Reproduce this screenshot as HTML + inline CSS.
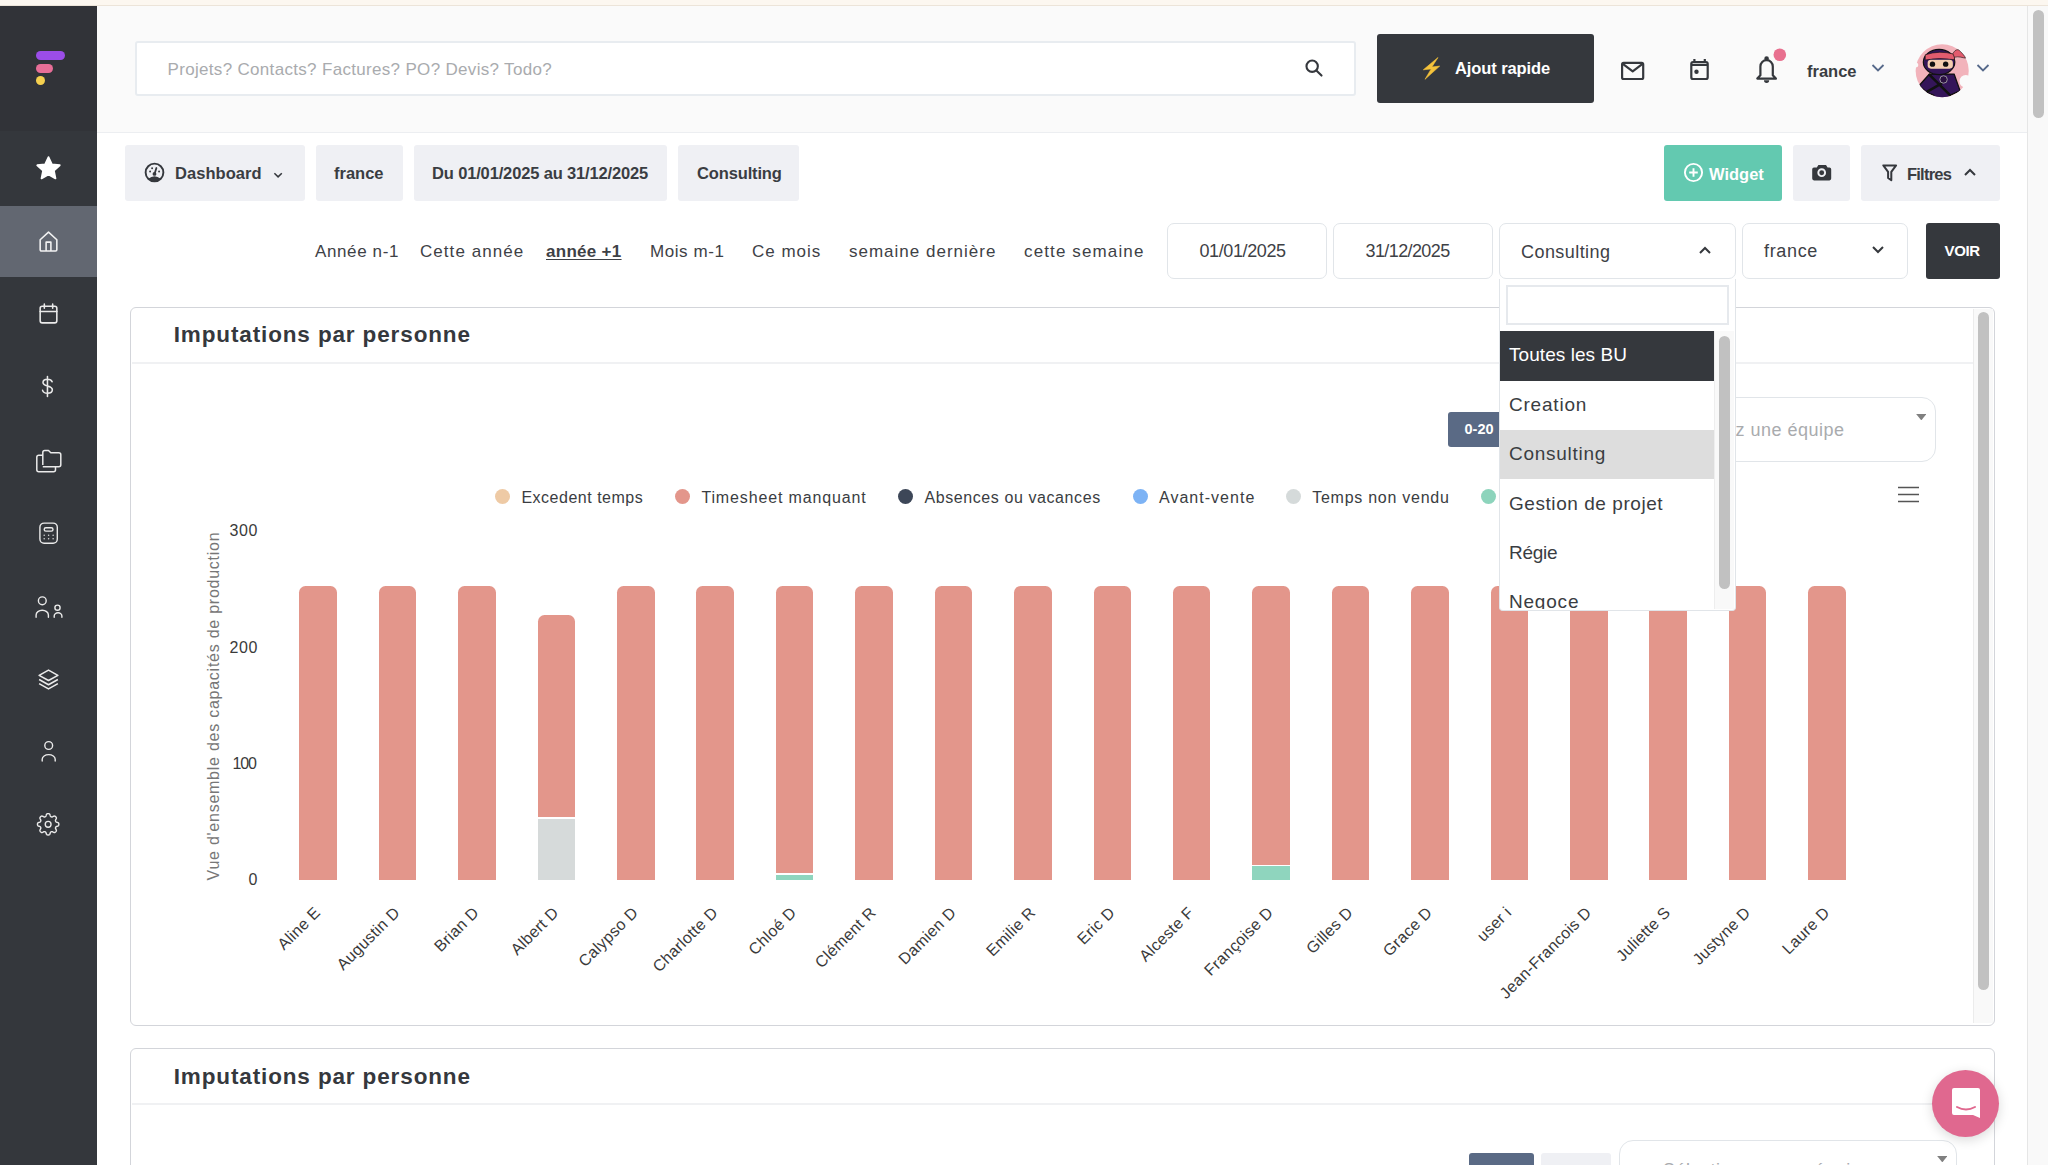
<!DOCTYPE html>
<html><head><meta charset="utf-8">
<style>
*{box-sizing:border-box;margin:0;padding:0}
html,body{width:2048px;height:1165px;overflow:hidden;background:#fff;font-family:"Liberation Sans",sans-serif;color:#3a3d42}
.a{position:absolute}
.t{position:absolute;white-space:nowrap;line-height:1}
.sico{position:absolute;left:36px;width:25px;height:25px}
.chip{position:absolute;top:145px;height:56px;background:#eff0f4;border-radius:3px}
.inp{position:absolute;top:223px;height:56px;border:1.6px solid #e1e5e9;border-radius:7px;background:#fff}
.card{position:absolute;left:130px;width:1865px;border:1.5px solid #d3d5da;border-radius:6px;background:#fff}
.bar{position:absolute;width:37.6px;background:#e3968b;border-radius:6.5px 6.5px 0 0}
.lbl{position:absolute;font-size:16px;color:#3a3a3a;white-space:nowrap;line-height:1;transform-origin:100% 50%;transform:rotate(-45deg)}
.dot{position:absolute;top:488.5px;width:15.3px;height:15.3px;border-radius:50%}
.item{position:absolute;left:1500.2px;width:213.8px;height:49.4px}
</style></head>
<body>
<div class="a" style="left:0;top:0;width:2048px;height:6px;background:#fcf7f0;border-bottom:1px solid #ece4d9"></div>
<div class="a" style="left:0;top:6px;width:97px;height:1159px;background:#34373c"></div>
<div class="a" style="left:0;top:6px;width:97px;height:125px;background:#313338"></div>
<div class="a" style="left:0;top:206px;width:97px;height:71px;background:#626771"></div>
<div class="a" style="left:97px;top:6px;width:1930px;height:126.5px;background:#fafafa;border-bottom:1.2px solid #eceef1"></div>
<div class="a" style="left:2027px;top:6px;width:21px;height:1159px;background:#f9f9f9;border-left:1px solid #e6e6e6"></div>
<div class="a" style="left:2032.6px;top:10px;width:11px;height:108px;background:#c1c1c1;border-radius:6px"></div>
<div class="a" style="left:36px;top:51px;width:29px;height:9px;border-radius:5px;background:#9b4de8"></div>
<div class="a" style="left:36px;top:64px;width:17px;height:9px;border-radius:5px;background:#e76e97"></div>
<div class="a" style="left:36px;top:76px;width:9px;height:9px;border-radius:50%;background:#f5d04f"></div>
<svg class="sico" style="top:155px;left:35px;width:27px;height:27px" viewBox="0 0 24 24"><path d="M12 1.9l3 6.4 7 .8-5.2 4.8 1.4 6.9L12 17.3l-6.2 3.5 1.4-6.9L2 9.1l7-.8z" fill="#fff" stroke="#fff" stroke-width="1.6" stroke-linejoin="round"/></svg>
<svg class="sico" style="top:229px" viewBox="0 0 24 24" fill="none" stroke="#f2f2f2" stroke-width="1.5" stroke-linejoin="round"><path d="M4 10.3L12 3l8 7.3V20a1.2 1.2 0 0 1-1.2 1.2H5.2A1.2 1.2 0 0 1 4 20z"/><path d="M9.7 21.2v-8.6h4.6v8.6"/></svg>
<svg class="sico" style="top:301px" viewBox="0 0 24 24" fill="none" stroke="#eaeaea" stroke-width="1.5" stroke-linecap="round"><rect x="4" y="5" width="16" height="16" rx="2"/><path d="M4 10h16M8 3v4M16 3v4"/></svg>
<svg class="sico" style="top:374px;left:35px;width:27px" viewBox="0 0 26 24" preserveAspectRatio="none" fill="none" stroke="#eaeaea" stroke-width="1.5" stroke-linecap="round"><path d="M16.5 7.5c-.5-1.5-2.2-2.5-4.5-2.5-2.5 0-4.3 1.3-4.3 3.2 0 4.3 9 2.5 9 7 0 2-1.9 3.3-4.7 3.3-2.4 0-4.2-1-4.7-2.8M12 2.5v19"/></svg>
<svg class="a" style="left:30px;top:440px;width:40px;height:40px" viewBox="30 440 40 40" fill="none" stroke="#eaeaea" stroke-width="1.5" stroke-linejoin="round"><path d="M42.8 465V452.5A2 2 0 0 1 44.8 450.5H48.5L50.8 452.8H58.8A2 2 0 0 1 60.8 454.8V464.8A2 2 0 0 1 58.8 466.8H42.8"/><path d="M42.8 455.2H38.8A2 2 0 0 0 36.8 457.2V469.8A2 2 0 0 0 38.8 471.8H53.5A2 2 0 0 0 55.5 469.8V466.8"/></svg>
<svg class="a" style="left:30px;top:515px;width:40px;height:35px" viewBox="30 515 40 35" fill="none" stroke="#eaeaea" stroke-width="1.4"><rect x="39.9" y="523.1" width="17.4" height="20.1" rx="4.2"/><rect x="44.2" y="527.7" width="8.8" height="3.4" rx="1.7"/><g fill="#dcdcdc" stroke="none"><circle cx="44.2" cy="535.3" r=".75"/><circle cx="48.6" cy="535.3" r=".75"/><circle cx="53.1" cy="535.3" r=".75"/><circle cx="44.2" cy="538.8" r=".75"/><circle cx="48.6" cy="538.8" r=".75"/><circle cx="53.1" cy="538.8" r=".75"/></g></svg>
<svg class="a" style="left:30px;top:590px;width:40px;height:35px" viewBox="30 590 40 35" fill="none" stroke="#eaeaea" stroke-width="1.4" stroke-linecap="round"><circle cx="42.3" cy="600.8" r="3.9"/><path d="M36.1 617.2v-2.2a6.15 4.8 0 0 1 12.3 0v2.2"/><circle cx="57.5" cy="607.7" r="2.6"/><path d="M54.2 617.2v-1.2a3.85 3.2 0 0 1 7.7 0v1.2"/></svg>
<svg class="sico" style="top:667px" viewBox="0 0 24 24" fill="none" stroke="#eaeaea" stroke-width="1.5" stroke-linejoin="round"><path d="M12 3l9 5-9 5-9-5z"/><path d="M3 12l9 5 9-5M3 16l9 5 9-5"/></svg>
<svg class="a" style="left:30px;top:735px;width:40px;height:35px" viewBox="30 735 40 35" fill="none" stroke="#eaeaea" stroke-width="1.4" stroke-linecap="round"><circle cx="48.7" cy="745.5" r="3.9"/><path d="M42.2 761v-1.8a6.5 4.6 0 0 1 13 0v1.8"/></svg>
<svg class="a" style="left:30px;top:806px;width:40px;height:37px" viewBox="30 806 40 37" fill="none" stroke="#eaeaea" stroke-width="1.4" stroke-linejoin="round"><path d="M48.15 813.62 L48.43 813.63 L48.71 813.66 L48.98 813.72 L49.25 813.82 L49.51 813.99 L49.74 814.26 L49.94 814.67 L50.09 815.16 L50.23 815.65 L50.36 816.04 L50.52 816.31 L50.69 816.50 L50.87 816.63 L51.05 816.74 L51.25 816.83 L51.44 816.90 L51.65 816.96 L51.87 816.99 L52.13 816.98 L52.43 816.89 L52.80 816.72 L53.24 816.47 L53.70 816.23 L54.12 816.08 L54.48 816.05 L54.78 816.11 L55.04 816.23 L55.28 816.38 L55.50 816.56 L55.70 816.75 L55.89 816.95 L56.07 817.17 L56.22 817.41 L56.34 817.67 L56.40 817.97 L56.37 818.33 L56.22 818.75 L55.98 819.21 L55.73 819.65 L55.56 820.02 L55.47 820.32 L55.46 820.58 L55.49 820.80 L55.55 821.01 L55.62 821.20 L55.71 821.40 L55.82 821.58 L55.95 821.76 L56.14 821.93 L56.41 822.09 L56.80 822.22 L57.29 822.36 L57.78 822.51 L58.19 822.71 L58.46 822.94 L58.63 823.20 L58.73 823.47 L58.79 823.74 L58.82 824.02 L58.83 824.30 L58.82 824.58 L58.79 824.86 L58.73 825.13 L58.63 825.40 L58.46 825.66 L58.19 825.89 L57.78 826.09 L57.29 826.24 L56.80 826.38 L56.41 826.51 L56.14 826.67 L55.95 826.84 L55.82 827.02 L55.71 827.20 L55.62 827.40 L55.55 827.59 L55.49 827.80 L55.46 828.02 L55.47 828.28 L55.56 828.58 L55.73 828.95 L55.98 829.39 L56.22 829.85 L56.37 830.27 L56.40 830.63 L56.34 830.93 L56.22 831.19 L56.07 831.43 L55.89 831.65 L55.70 831.85 L55.50 832.04 L55.28 832.22 L55.04 832.37 L54.78 832.49 L54.48 832.55 L54.12 832.52 L53.70 832.37 L53.24 832.13 L52.80 831.88 L52.43 831.71 L52.13 831.62 L51.87 831.61 L51.65 831.64 L51.44 831.70 L51.25 831.77 L51.05 831.86 L50.87 831.97 L50.69 832.10 L50.52 832.29 L50.36 832.56 L50.23 832.95 L50.09 833.44 L49.94 833.93 L49.74 834.34 L49.51 834.61 L49.25 834.78 L48.98 834.88 L48.71 834.94 L48.43 834.97 L48.15 834.98 L47.87 834.97 L47.59 834.94 L47.32 834.88 L47.05 834.78 L46.79 834.61 L46.56 834.34 L46.36 833.93 L46.21 833.44 L46.07 832.95 L45.94 832.56 L45.78 832.29 L45.61 832.10 L45.43 831.97 L45.25 831.86 L45.05 831.77 L44.86 831.70 L44.65 831.64 L44.43 831.61 L44.17 831.62 L43.87 831.71 L43.50 831.88 L43.06 832.13 L42.60 832.37 L42.18 832.52 L41.82 832.55 L41.52 832.49 L41.26 832.37 L41.02 832.22 L40.80 832.04 L40.60 831.85 L40.41 831.65 L40.23 831.43 L40.08 831.19 L39.96 830.93 L39.90 830.63 L39.93 830.27 L40.08 829.85 L40.32 829.39 L40.57 828.95 L40.74 828.58 L40.83 828.28 L40.84 828.02 L40.81 827.80 L40.75 827.59 L40.68 827.40 L40.59 827.20 L40.48 827.02 L40.35 826.84 L40.16 826.67 L39.89 826.51 L39.50 826.38 L39.01 826.24 L38.52 826.09 L38.11 825.89 L37.84 825.66 L37.67 825.40 L37.57 825.13 L37.51 824.86 L37.48 824.58 L37.47 824.30 L37.48 824.02 L37.51 823.74 L37.57 823.47 L37.67 823.20 L37.84 822.94 L38.11 822.71 L38.52 822.51 L39.01 822.36 L39.50 822.22 L39.89 822.09 L40.16 821.93 L40.35 821.76 L40.48 821.58 L40.59 821.40 L40.68 821.20 L40.75 821.01 L40.81 820.80 L40.84 820.58 L40.83 820.32 L40.74 820.02 L40.57 819.65 L40.32 819.21 L40.08 818.75 L39.93 818.33 L39.90 817.97 L39.96 817.67 L40.08 817.41 L40.23 817.17 L40.41 816.95 L40.60 816.75 L40.80 816.56 L41.02 816.38 L41.26 816.23 L41.52 816.11 L41.82 816.05 L42.18 816.08 L42.60 816.23 L43.06 816.47 L43.50 816.72 L43.87 816.89 L44.17 816.98 L44.43 816.99 L44.65 816.96 L44.86 816.90 L45.05 816.83 L45.25 816.74 L45.43 816.63 L45.61 816.50 L45.78 816.31 L45.94 816.04 L46.07 815.65 L46.21 815.16 L46.36 814.67 L46.56 814.26 L46.79 813.99 L47.05 813.82 L47.32 813.72 L47.59 813.66 L47.87 813.63Z"/><circle cx="48.15" cy="824.3" r="2.9"/></svg>
<div class="a" style="left:135px;top:41px;width:1221px;height:55px;background:#fff;border:2px solid #e8ecf0;border-radius:3px"></div>
<div class="t" style="left:167.5px;top:60.8px;font-size:17px;color:#a9abae;letter-spacing:0.32px;">Projets? Contacts? Factures? PO? Devis? Todo?</div>
<svg class="a" style="left:1303px;top:57px;width:22px;height:22px" viewBox="0 0 24 24" fill="none" stroke="#35383d" stroke-width="2.3" stroke-linecap="round"><circle cx="10" cy="10" r="6.2"/><path d="M14.6 14.6l5.6 5.6"/></svg>
<div class="a" style="left:1377px;top:34px;width:217px;height:69px;background:#35383d;border-radius:3px"></div>
<svg class="a" style="left:1420px;top:55px;width:24px;height:27px" viewBox="1420 55 24 27"><path d="M1438 57.5L1423.3 69.8 1431.2 68.9 1425 79.3 1439.7 66.1 1431.9 67Z" fill="#f5c33b" stroke="#f5c33b" stroke-width="0.6" stroke-linejoin="round"/></svg>
<div class="t" style="left:1455px;top:59.9px;font-size:16.5px;color:#fff;font-weight:bold;letter-spacing:-0.09px;">Ajout rapide</div>
<svg class="a" style="left:1600px;top:40px;width:200px;height:60px" viewBox="1600 40 200 60" fill="none" stroke="#35383d" stroke-width="2.2" stroke-linejoin="round"><rect x="1622.1" y="62.9" width="21.1" height="16.1" rx="1.5"/><path d="M1622.8 63.8L1632.7 71.3 1642.5 63.8"/><rect x="1691.3" y="62" width="16.4" height="17" rx="1.8"/><path d="M1691.3 64.9h16.4M1694.4 59v3.5M1704.8 59v3.5"/><circle cx="1696.5" cy="71.7" r="2.2" fill="#35383d" stroke="none"/><path d="M1757.3 78.6L1760.4 75.3V66.4A6.2 6.2 0 0 1 1772.8 66.4V75.3L1775.9 78.6Z"/><circle cx="1766.6" cy="58.6" r="1.2" fill="#35383d"/><path d="M1764 80.3A2.6 2.6 0 0 0 1769.2 80.3Z" fill="#35383d" stroke="none"/><circle cx="1779.8" cy="54.8" r="7.6" fill="#fafafa" stroke="none"/><circle cx="1779.8" cy="54.8" r="6.3" fill="#e8708f" stroke="none"/></svg>
<div class="t" style="left:1807px;top:62.7px;font-size:16.5px;color:#3a3d42;font-weight:bold;">france</div>
<svg class="a" style="left:1871px;top:63px;width:14px;height:10px" viewBox="0 0 14 10" fill="none" stroke="#56698a" stroke-width="1.8"><path d="M1.5 2l5.5 5.5L12.5 2"/></svg>
<svg class="a" style="left:1976px;top:63px;width:14px;height:10px" viewBox="0 0 14 10" fill="none" stroke="#56698a" stroke-width="1.8"><path d="M1.5 2l5.5 5.5L12.5 2"/></svg>
<svg class="a" style="left:1900px;top:35px;width:100px;height:70px" viewBox="0 0 1664 1165">
<defs><clipPath id="avc"><circle cx="702" cy="595" r="442"/></clipPath></defs>
<circle cx="702" cy="595" r="442" fill="#f2b3bb"/>
<g clip-path="url(#avc)">
<path d="M320 840L490 650H900L1000 930 930 960 840 1000 830 1100H580L560 1000 450 960Z" fill="#341559" stroke="#111" stroke-width="22" stroke-linejoin="round"/>
<path d="M480 650L840 1010M440 950L700 800" stroke="#111" stroke-width="42"/>
</g>
<circle cx="1095" cy="770" r="105" fill="#fafafa"/><circle cx="265" cy="500" r="40" fill="#fafafa"/>
<ellipse cx="650" cy="450" rx="262" ry="210" fill="#341559" stroke="#111" stroke-width="20"/>
<path d="M420 330Q650 250 905 320L905 410Q650 370 420 415Z" fill="#e25c6e" stroke="#111" stroke-width="10"/>
<path d="M880 310C930 220 980 240 1000 270 1040 310 1080 350 1090 385 1040 380 980 350 905 370Z" fill="#e25c6e" stroke="#111" stroke-width="10" stroke-linejoin="round"/>
<rect x="460" y="410" width="420" height="150" rx="55" fill="#f4cdb0"/>
<circle cx="540" cy="485" r="45" fill="#111"/><circle cx="760" cy="485" r="45" fill="#111"/>
<circle cx="725" cy="740" r="62" fill="#2a1040" stroke="#aaa" stroke-width="14"/>
</svg>
<div class="chip" style="left:125px;width:180px"></div>
<svg class="a" style="left:144px;top:162px;width:21px;height:21px" viewBox="0 0 22 22"><circle cx="11" cy="11" r="9.3" fill="none" stroke="#35383d" stroke-width="2"/><path d="M4.4 17.6Q11 12 17.6 17.6A9.3 9.3 0 0 1 4.4 17.6z" fill="#35383d"/><path d="M11 12.5l2-6.2" stroke="#35383d" stroke-width="1.9" stroke-linecap="round"/><circle cx="11" cy="12.5" r="2" fill="#35383d"/><circle cx="6.4" cy="10" r="1" fill="#35383d"/><circle cx="8.5" cy="6.5" r="1" fill="#35383d"/><circle cx="15.8" cy="10" r="1" fill="#35383d"/></svg>
<div class="t" style="left:175px;top:165.0px;font-size:16.5px;color:#3a3d42;font-weight:bold;letter-spacing:0.06px;">Dashboard</div>
<svg class="a" style="left:270px;top:168px;width:16px;height:12px" viewBox="270 168 16 12" fill="none" stroke="#35383d" stroke-width="1.5"><path d="M274.4 173.2l3.7 3.7 3.7-3.7"/></svg>
<div class="chip" style="left:316px;width:87px"></div>
<div class="t" style="left:334px;top:165.0px;font-size:16.5px;color:#3a3d42;font-weight:bold;">france</div>
<div class="chip" style="left:414px;width:253px"></div>
<div class="t" style="left:432px;top:165.0px;font-size:16.5px;color:#3a3d42;font-weight:bold;letter-spacing:-0.15px;">Du 01/01/2025 au 31/12/2025</div>
<div class="chip" style="left:678px;width:121px"></div>
<div class="t" style="left:697px;top:165.0px;font-size:16.5px;color:#3a3d42;font-weight:bold;letter-spacing:-0.14px;">Consulting</div>
<div class="a" style="left:1664px;top:145px;width:118px;height:56px;background:#63c9b0;border-radius:3px"></div>
<svg class="a" style="left:1683px;top:162px;width:21px;height:21px" viewBox="0 0 22 22" fill="none" stroke="#fff" stroke-width="2"><circle cx="11" cy="11" r="9"/><path d="M11 6.5v9M6.5 11h9"/></svg>
<div class="t" style="left:1709px;top:166.0px;font-size:16.5px;color:#fff;font-weight:bold;">Widget</div>
<div class="a" style="left:1793px;top:145px;width:57px;height:56px;background:#eff0f4;border-radius:3px"></div>
<svg class="a" style="left:1805px;top:155px;width:35px;height:35px" viewBox="1805 155 35 35"><path d="M1814 167.5h2.8l1.6-2.6h7.6l1.6 2.6h1.8a1.8 1.8 0 0 1 1.8 1.8v9.3a1.8 1.8 0 0 1-1.8 1.8h-15.4a1.8 1.8 0 0 1-1.8-1.8v-9.3a1.8 1.8 0 0 1 1.8-1.8z" fill="#35383d"/><circle cx="1821.7" cy="172.7" r="3.4" fill="none" stroke="#eff0f4" stroke-width="1.9"/></svg>
<div class="a" style="left:1861px;top:145px;width:139px;height:56px;background:#eff0f4;border-radius:3px"></div>
<svg class="a" style="left:1875px;top:158px;width:30px;height:30px" viewBox="1875 158 30 30" fill="none" stroke="#35383d" stroke-width="2" stroke-linejoin="round"><path d="M1883.3 165.4h12.8l-4.8 6.5v8.3l-3.2-2.2v-6.1z"/></svg>
<div class="t" style="left:1907px;top:166.0px;font-size:16.5px;color:#3a3d42;font-weight:bold;letter-spacing:-0.77px;">Filtres</div>
<svg class="a" style="left:1963px;top:167px;width:14px;height:10px" viewBox="0 0 14 10" fill="none" stroke="#35383d" stroke-width="2"><path d="M2 8l5-5 5 5"/></svg>
<div class="t" style="left:315px;top:242.6px;font-size:17px;color:#3e4146;letter-spacing:0.62px;">Année n-1</div>
<div class="t" style="left:420px;top:242.6px;font-size:17px;color:#3e4146;letter-spacing:1.05px;">Cette année</div>
<div class="t" style="left:546px;top:242.6px;font-size:17px;color:#3e4146;font-weight:bold;letter-spacing:0.29px;text-decoration:underline;text-underline-offset:2px;">année +1</div>
<div class="t" style="left:650px;top:242.6px;font-size:17px;color:#3e4146;letter-spacing:0.57px;">Mois m-1</div>
<div class="t" style="left:752px;top:242.6px;font-size:17px;color:#3e4146;letter-spacing:1.0px;">Ce mois</div>
<div class="t" style="left:849px;top:242.6px;font-size:17px;color:#3e4146;letter-spacing:1.0px;">semaine dernière</div>
<div class="t" style="left:1024px;top:242.6px;font-size:17px;color:#3e4146;letter-spacing:1.13px;">cette semaine</div>
<div class="inp" style="left:1167px;width:160px"></div>
<div class="t" style="left:1199.5px;top:242.1px;font-size:18px;color:#3e4146;letter-spacing:-0.39px;">01/01/2025</div>
<div class="inp" style="left:1333px;width:160px"></div>
<div class="t" style="left:1365.5px;top:242.1px;font-size:18px;color:#3e4146;letter-spacing:-0.6px;">31/12/2025</div>
<div class="inp" style="left:1499px;width:237px"></div>
<div class="t" style="left:1521px;top:242.8px;font-size:18px;color:#3e4146;letter-spacing:0.44px;">Consulting</div>
<svg class="a" style="left:1698px;top:245px;width:14px;height:10px" viewBox="0 0 14 10" fill="none" stroke="#35383d" stroke-width="2"><path d="M2 8l5-5 5 5"/></svg>
<div class="inp" style="left:1742px;width:166px"></div>
<div class="t" style="left:1764px;top:242.3px;font-size:18px;color:#3e4146;letter-spacing:0.66px;">france</div>
<svg class="a" style="left:1871px;top:245px;width:14px;height:10px" viewBox="0 0 14 10" fill="none" stroke="#35383d" stroke-width="2"><path d="M2 2l5 5 5-5"/></svg>
<div class="a" style="left:1926px;top:223px;width:74px;height:56px;background:#35383d;border-radius:3px"></div>
<div class="t" style="left:1944.5px;top:243.3px;font-size:15px;color:#fff;font-weight:bold;letter-spacing:-0.33px;">VOIR</div>
<div class="card" style="top:307px;height:718.5px"></div>
<div class="a" style="left:132px;top:362px;width:1841px;height:2px;background:#f0f1f3"></div>
<div class="a" style="left:1973px;top:309px;width:20px;height:714px;background:#f9f9f9;border-left:1px solid #ececec"></div>
<div class="a" style="left:1978px;top:312px;width:11px;height:678px;background:#c1c1c1;border-radius:6px"></div>
<div class="t" style="left:173.7px;top:323.9px;font-size:22.5px;color:#35383d;font-weight:bold;letter-spacing:0.87px;">Imputations par personne</div>
<div class="a" style="left:1448px;top:412px;width:60px;height:35px;background:#5a6a85;border-radius:3px"></div>
<div class="t" style="left:1464.5px;top:421.7px;font-size:14.5px;color:#fff;font-weight:bold;">0-20</div>
<div class="a" style="left:1600px;top:397px;width:336px;height:65px;border:1.6px solid #e1e5e9;border-radius:14px;background:#fff"></div>
<div class="t" style="right:203.5px;top:420.8px;font-size:18px;letter-spacing:0.5px;color:#a9abae">Sélectionnez une équipe</div>
<svg class="a" style="left:1915.8px;top:413.8px;width:10.6px;height:6.4px" viewBox="0 0 13 8"><path d="M0 0h13L6.5 8z" fill="#808080"/></svg>
<svg class="a" style="left:1897px;top:485px;width:23px;height:19px" viewBox="0 0 23 19" stroke="#555" stroke-width="1.5"><path d="M1 2.5h21M1 9.5h21M1 16.5h21"/></svg>
<div class="dot" style="left:495.2px;background:#eecaa5"></div>
<div class="t" style="left:521.4px;top:489.5px;font-size:16px;color:#3a3d42;letter-spacing:0.51px;">Excedent temps</div>
<div class="dot" style="left:675px;background:#e3968b"></div>
<div class="t" style="left:701.4px;top:489.5px;font-size:16px;color:#3a3d42;letter-spacing:0.86px;">Timesheet manquant</div>
<div class="dot" style="left:897.7px;background:#3d4758"></div>
<div class="t" style="left:924.4px;top:489.5px;font-size:16px;color:#3a3d42;letter-spacing:0.59px;">Absences ou vacances</div>
<div class="dot" style="left:1132.9px;background:#7db3f5"></div>
<div class="t" style="left:1159px;top:489.5px;font-size:16px;color:#3a3d42;letter-spacing:1.02px;">Avant-vente</div>
<div class="dot" style="left:1286px;background:#d5dada"></div>
<div class="t" style="left:1312.2px;top:489.5px;font-size:16px;color:#3a3d42;letter-spacing:0.74px;">Temps non vendu</div>
<div class="dot" style="left:1480.8px;background:#8dd4bc"></div>
<div class="t" style="left:229.5px;top:522.5px;font-size:16px;color:#3a3a3a;letter-spacing:0.6px;">300</div>
<div class="t" style="left:229.5px;top:639.5px;font-size:16px;color:#3a3a3a;letter-spacing:0.6px;">200</div>
<div class="t" style="left:232.5px;top:756.0px;font-size:16px;color:#3a3a3a;letter-spacing:-1.15px;">100</div>
<div class="t" style="left:248.5px;top:871.5px;font-size:16px;color:#3a3a3a;">0</div>
<div class="t" style="left:214px;top:706px;font-size:16px;letter-spacing:0.75px;color:#777;transform:translate(-50%,-50%) rotate(-90deg)">Vue d'ensemble des capacités de production</div>
<div class="bar" style="left:299.3px;top:586px;height:294px"></div>
<div class="lbl" style="right:1730.2px;top:902px;letter-spacing:0.3px">Aline E</div>
<div class="bar" style="left:378.7px;top:586px;height:294px"></div>
<div class="lbl" style="right:1650.8px;top:902px;letter-spacing:0.3px">Augustin D</div>
<div class="bar" style="left:458.1px;top:586px;height:294px"></div>
<div class="lbl" style="right:1571.4px;top:902px;letter-spacing:0.3px">Brian D</div>
<div class="bar" style="left:537.6px;top:615px;height:265px"></div>
<div class="a" style="left:537.6px;top:817px;width:37.6px;height:2.2px;background:#fff"></div>
<div class="a" style="left:537.6px;top:819.2px;width:37.6px;height:60.8px;background:#d6dada"></div>
<div class="lbl" style="right:1491.9px;top:902px;letter-spacing:0.3px">Albert D</div>
<div class="bar" style="left:617.0px;top:586px;height:294px"></div>
<div class="lbl" style="right:1412.5px;top:902px;letter-spacing:0.3px">Calypso D</div>
<div class="bar" style="left:696.4px;top:586px;height:294px"></div>
<div class="lbl" style="right:1333.1px;top:902px;letter-spacing:0.3px">Charlotte D</div>
<div class="bar" style="left:775.8px;top:586px;height:294px"></div>
<div class="a" style="left:775.8px;top:873px;width:37.6px;height:1.5px;background:#fff"></div>
<div class="a" style="left:775.8px;top:874.5px;width:37.6px;height:5.5px;background:#8fd5be"></div>
<div class="lbl" style="right:1253.7px;top:902px;letter-spacing:0.3px">Chloé D</div>
<div class="bar" style="left:855.2px;top:586px;height:294px"></div>
<div class="lbl" style="right:1174.3px;top:902px;letter-spacing:0.3px">Clément R</div>
<div class="bar" style="left:934.7px;top:586px;height:294px"></div>
<div class="lbl" style="right:1094.8px;top:902px;letter-spacing:0.3px">Damien D</div>
<div class="bar" style="left:1014.1px;top:586px;height:294px"></div>
<div class="lbl" style="right:1015.4px;top:902px;letter-spacing:0.3px">Emilie R</div>
<div class="bar" style="left:1093.5px;top:586px;height:294px"></div>
<div class="lbl" style="right:936.0px;top:902px;letter-spacing:0.3px">Eric D</div>
<div class="bar" style="left:1172.9px;top:586px;height:294px"></div>
<div class="lbl" style="right:856.6px;top:902px;letter-spacing:0.3px">Alceste F</div>
<div class="bar" style="left:1252.3px;top:586px;height:294px"></div>
<div class="a" style="left:1252.3px;top:864.7px;width:37.6px;height:1.4px;background:#fff"></div>
<div class="a" style="left:1252.3px;top:866.1px;width:37.6px;height:13.9px;background:#8fd5be"></div>
<div class="lbl" style="right:777.2px;top:902px;letter-spacing:0.3px">Françoise D</div>
<div class="bar" style="left:1331.8px;top:586px;height:294px"></div>
<div class="lbl" style="right:697.7px;top:902px;letter-spacing:0.3px">Gilles D</div>
<div class="bar" style="left:1411.2px;top:586px;height:294px"></div>
<div class="lbl" style="right:618.3px;top:902px;letter-spacing:0.3px">Grace D</div>
<div class="bar" style="left:1490.6px;top:586px;height:294px"></div>
<div class="lbl" style="right:538.9px;top:902px;letter-spacing:0.3px">user i</div>
<div class="bar" style="left:1570.0px;top:586px;height:294px"></div>
<div class="lbl" style="right:459.5px;top:902px;letter-spacing:0.3px">Jean-Francois D</div>
<div class="bar" style="left:1649.4px;top:586px;height:294px"></div>
<div class="lbl" style="right:380.1px;top:902px;letter-spacing:0.3px">Juliette S</div>
<div class="bar" style="left:1728.9px;top:586px;height:294px"></div>
<div class="lbl" style="right:300.6px;top:902px;letter-spacing:0.3px">Justyne D</div>
<div class="bar" style="left:1808.3px;top:586px;height:294px"></div>
<div class="lbl" style="right:221.2px;top:902px;letter-spacing:0.3px">Laure D</div>
<div class="a" style="left:1499px;top:279px;width:237px;height:332px;background:#fff;border:1.6px solid #e1e5e9;border-top:none;border-radius:0 0 4px 4px"></div>
<div class="a" style="left:1506px;top:285px;width:223px;height:40px;border:2px solid #e6e9ed"></div>
<div class="item" style="top:331.3px;height:49.4px;background:#35383d;overflow:hidden"><div class="t" style="left:8.8px;top:14.1px;font-size:19px;color:#fff;letter-spacing:0.06px;">Toutes les BU</div></div>
<div class="item" style="top:380.7px;height:49.4px;overflow:hidden"><div class="t" style="left:8.8px;top:14.1px;font-size:19px;color:#3a3d42;letter-spacing:0.79px;">Creation</div></div>
<div class="item" style="top:430.1px;height:49.4px;background:#dddddd;overflow:hidden"><div class="t" style="left:8.8px;top:14.1px;font-size:19px;color:#3a3d42;letter-spacing:0.72px;">Consulting</div></div>
<div class="item" style="top:479.5px;height:49.4px;overflow:hidden"><div class="t" style="left:8.8px;top:14.1px;font-size:19px;color:#3a3d42;letter-spacing:0.56px;">Gestion de projet</div></div>
<div class="item" style="top:528.9px;height:49.4px;overflow:hidden"><div class="t" style="left:8.8px;top:14.1px;font-size:19px;color:#3a3d42;letter-spacing:-0.25px;">Régie</div></div>
<div class="item" style="top:578.3px;height:30.7px;overflow:hidden"><div class="t" style="left:8.8px;top:14.1px;font-size:19px;color:#3a3d42;letter-spacing:0.8px;">Negoce</div></div>
<div class="a" style="left:1714px;top:331px;width:19.5px;height:278px;background:#f9f9f9;border-left:1px solid #eeeeee"></div>
<div class="a" style="left:1719.3px;top:335.5px;width:10.7px;height:253px;background:#c1c1c1;border-radius:6px"></div>
<div class="card" style="top:1048px;height:200px"></div>
<div class="a" style="left:132px;top:1103px;width:1861px;height:2px;background:#f0f1f3"></div>
<div class="t" style="left:173.7px;top:1065.5px;font-size:22.5px;color:#35383d;font-weight:bold;letter-spacing:0.87px;">Imputations par personne</div>
<div class="a" style="left:1469px;top:1153px;width:65px;height:40px;background:#5a6a85;border-radius:3px"></div>
<div class="a" style="left:1541px;top:1153px;width:70px;height:40px;background:#eff0f4;border-radius:3px"></div>
<div class="a" style="left:1619px;top:1139.5px;width:338px;height:65px;border:1.6px solid #e1e5e9;border-radius:14px;background:#fff"></div>
<div class="t" style="left:1663px;top:1161.3px;font-size:18px;color:#a9abae;letter-spacing:0.5px;">Sélectionnez une équipe</div>
<svg class="a" style="left:1936.5px;top:1155.5px;width:10.6px;height:6.4px" viewBox="0 0 13 8"><path d="M0 0h13L6.5 8z" fill="#808080"/></svg>
<div class="a" style="left:1932.3px;top:1070px;width:67px;height:67px;border-radius:50%;background:#e0688f;box-shadow:0 3px 12px rgba(0,0,0,.15)"></div>
<svg class="a" style="left:1950px;top:1086px;width:32px;height:34px" viewBox="0 0 32 34"><path d="M4 2h24a2 2 0 0 1 2 2v28l-7-3H4a2 2 0 0 1-2-2V4a2 2 0 0 1 2-2z" fill="#fff"/><path d="M7 21q9 5 18 0" fill="none" stroke="#e0688f" stroke-width="2" stroke-linecap="round"/></svg>
</body></html>
